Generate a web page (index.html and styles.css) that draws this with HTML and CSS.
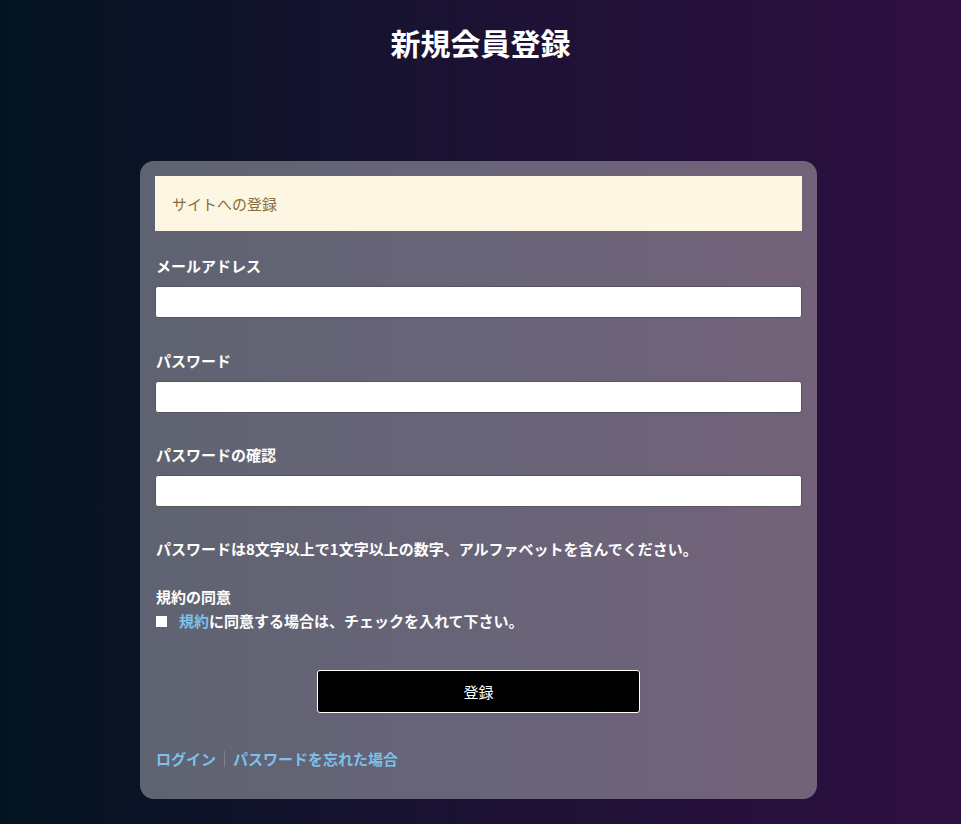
FILE: index.html
```html
<!DOCTYPE html>
<html lang="ja">
<head>
<meta charset="utf-8">
<title>新規会員登録</title>
<link rel="stylesheet" href="styles.css">
</head>
<body>
<h1 class="title">新規会員登録</h1>
<main class="card">
  <div class="notice">サイトへの登録</div>
  <div class="group first">
    <label class="label">メールアドレス</label>
    <input class="input" type="text">
  </div>
  <div class="group">
    <label class="label">パスワード</label>
    <input class="input" type="password">
  </div>
  <div class="group third">
    <label class="label">パスワードの確認</label>
    <input class="input" type="password">
  </div>
  <p class="hint">パスワードは8文字以上で1文字以上の数字、アルファベットを含んでください。</p>
  <div class="agree">
    <div class="agree-title">規約の同意</div>
    <div class="agree-row"><span class="check"></span><span><a class="link" href="#">規約</a>に同意する場合は、チェックを入れて下さい。</span></div>
  </div>
  <div class="actions"><button class="btn" type="button">登録</button></div>
  <div class="links"><a class="link" href="#">ログイン</a><span class="sep"></span><a class="link" href="#">パスワードを忘れた場合</a></div>
</main>
</body>
</html>
```
FILE: styles.css
```css
html, body {
  margin: 0;
  padding: 0;
}
body {
  min-height: 824px;
  background: linear-gradient(90deg, #031420 0%, #1a1232 45%, #2f0f42 100%);
  font-family: "Noto Sans CJK JP", "Noto Sans", sans-serif;
  color: #fff;
  overflow: hidden;
}
.title {
  margin: 0;
  padding-top: 22px;
  height: 139px;
  line-height: 40px;
  font-size: 30px;
  font-weight: bold;
  text-align: center;
  color: #fff;
}
.card {
  width: 647px;
  margin: 0 0 0 140px;
  padding: 15px 15px 29px;
  border-radius: 14px;
  background: linear-gradient(90deg, #5f6371 0%, #686478 50%, #736279 100%);
}
.notice {
  height: 55px;
  line-height: 55px;
  padding: 0 17px;
  background: #fcf6e2;
  color: #8a6d3b;
  font-size: 15px;
}
.group {
  margin-top: 32px;
}
.group.first {
  margin-top: 24px;
}
.group.third {
  margin-top: 31px;
}
.label {
  display: block;
  font-size: 15px;
  line-height: 22px;
  font-weight: bold;
  margin-bottom: 9px;
  padding-left: 1px;
}
.input {
  display: block;
  box-sizing: border-box;
  width: 100%;
  height: 32px;
  margin: 0;
  border: 1px solid #55555f;
  border-radius: 3px;
  background: #fff;
}
.hint {
  margin: 31px 0 0;
  font-size: 15px;
  line-height: 22px;
  font-weight: bold;
  padding-left: 1px;
}
.agree {
  margin-top: 26px;
  font-size: 15px;
  line-height: 22px;
  font-weight: bold;
  padding-left: 1px;
}
.agree-title {
  line-height: 22px;
}
.agree-row {
  display: flex;
  align-items: center;
  gap: 12px;
  margin-top: 2px;
}
.check {
  width: 11px;
  height: 11px;
  background: #fff;
  flex: none;
}
.link {
  color: #7cc1e9;
  text-decoration: none;
}
.actions {
  margin-top: 38px;
  display: flex;
  justify-content: center;
}
.btn {
  width: 323px;
  height: 43px;
  box-sizing: border-box;
  background: #000;
  color: #fff;
  border: 1px solid #fff;
  border-radius: 3px;
  font-family: "Noto Sans CJK JP", sans-serif;
  font-size: 15px;
}
.links {
  margin-top: 35px;
  display: flex;
  align-items: center;
  font-size: 15px;
  line-height: 22px;
  font-weight: bold;
  padding-left: 1px;
}
.sep {
  width: 1px;
  height: 16px;
  background: #85808f;
  margin: 0 8px;
}
```
